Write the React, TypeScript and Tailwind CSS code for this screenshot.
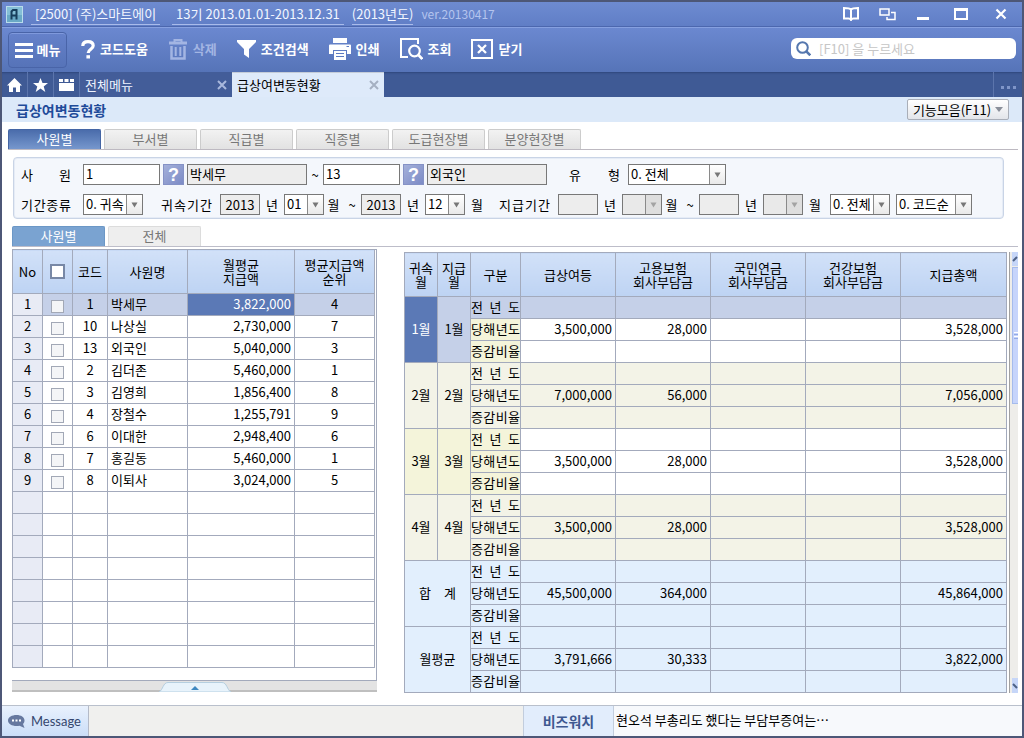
import React from "react";

type Align = "left" | "center" | "right";

const employees = [
  { no: 1, code: 1, name: "박세무", pay: "3,822,000", rank: 4 },
  { no: 2, code: 10, name: "나상실", pay: "2,730,000", rank: 7 },
  { no: 3, code: 13, name: "외국인", pay: "5,040,000", rank: 3 },
  { no: 4, code: 2, name: "김더존", pay: "5,460,000", rank: 1 },
  { no: 5, code: 3, name: "김영희", pay: "1,856,400", rank: 8 },
  { no: 6, code: 4, name: "장철수", pay: "1,255,791", rank: 9 },
  { no: 7, code: 6, name: "이대한", pay: "2,948,400", rank: 6 },
  { no: 8, code: 7, name: "홍길동", pay: "5,460,000", rank: 1 },
  { no: 9, code: 8, name: "이퇴사", pay: "3,024,000", rank: 5 },
];

const months = [
  { label: "1월", pay: "3,500,000", ins: "28,000", total: "3,528,000" },
  { label: "2월", pay: "7,000,000", ins: "56,000", total: "7,056,000" },
  { label: "3월", pay: "3,500,000", ins: "28,000", total: "3,528,000" },
  { label: "4월", pay: "3,500,000", ins: "28,000", total: "3,528,000" },
];

const sums = [
  { label: "합　계", pay: "45,500,000", ins: "364,000", total: "45,864,000" },
  { label: "월평균", pay: "3,791,666", ins: "30,333", total: "3,822,000" },
];

const line = "border border-[#a3aabc]";

function Spread({ text }: { text: string }) {
  return (
    <span className="flex justify-between">
      {Array.from(text).map((c, i) => (
        <span key={i}>{c}</span>
      ))}
    </span>
  );
}

function ToolButton({
  label,
  children,
  faded = false,
}: {
  label: string;
  children: React.ReactNode;
  faded?: boolean;
}) {
  return (
    <button
      type="button"
      disabled={faded}
      className={`flex h-9 items-center gap-[5px] pb-0.5 font-bold ${faded ? "text-[#a3b5e3]" : "text-white"}`}
    >
      {children}
      <span>{label}</span>
    </button>
  );
}

function Picker({ label, value, width, disabled = false }: { label: string; value: string; width: string; disabled?: boolean }) {
  return (
    <span className={`relative block h-[21px] shrink-0 ${width}`}>
      <select
        aria-label={label}
        disabled={disabled}
        defaultValue={value}
        className={`block h-full w-full appearance-none border border-[#787878] pr-4 pb-0.5 pl-[2px] leading-4 text-black opacity-100 ${disabled ? "bg-[#e9e9e9]" : "bg-white"}`}
      >
        <option value={value}>{value}</option>
      </select>
      <span
        className={`pointer-events-none absolute inset-y-px right-px flex w-4 items-center justify-center border-l border-[#8a8a8a] ${disabled ? "bg-[#dedede]" : "bg-linear-to-b from-white to-[#e9e9e9]"}`}
      >
        <svg width="7" height="6" viewBox="0 0 7 6">
          <path d="M0.5 0.5h6L3.5 5.5z" fill={disabled ? "#a3a3a3" : "#777"} />
        </svg>
      </span>
    </span>
  );
}

function TextBox({ label, value, width, readOnly = false, center = false }: { label: string; value: string; width: string; readOnly?: boolean; center?: boolean }) {
  return (
    <input
      type="text"
      aria-label={label}
      defaultValue={value}
      readOnly={readOnly}
      className={`block h-[21px] shrink-0 border border-[#787878] text-black outline-none ${width} ${readOnly ? "bg-[#ededed]" : "bg-white"} ${center ? "text-center" : "pb-0.5 pl-[2px]"}`}
    />
  );
}

function HelpButton({ label }: { label: string }) {
  return (
    <button
      type="button"
      aria-label={label}
      className="mx-[3px] h-[21px] w-[21px] shrink-0 border border-[#8592c6] bg-linear-to-br from-[#a4b0da] to-[#7c8bc6] font-['Liberation_Sans',sans-serif] text-lg leading-[18px] font-bold text-white"
    >
      ?
    </button>
  );
}

function Mark({ children, width = "w-6" }: { children: React.ReactNode; width?: string }) {
  return <span className={`shrink-0 text-center ${width}`}>{children}</span>;
}

function Head({ children }: { children: React.ReactNode }) {
  return (
    <th scope="col" className={`${line} bg-linear-to-b from-[#d2e1f8] to-[#bdd3f3] p-0 leading-[14px] font-normal`}>
      {children}
    </th>
  );
}

function Cell({ children, bg, align = "center", span, cols }: { children?: React.ReactNode; bg: string; align?: Align; span?: number; cols?: number }) {
  const side = align === "right" ? "pr-[3px] text-right" : align === "left" ? "pl-[3px] text-left" : "text-center";
  return (
    <td rowSpan={span} colSpan={cols} className={`${line} pt-0 pb-[2px] leading-[18px] whitespace-nowrap ${side} ${bg}`}>
      {children}
    </td>
  );
}

function Group({ item, index, total }: { item: (typeof months)[number]; index: number; total: boolean }) {
  const first = !total && index === 0;
  const odd = index % 2 === 1;
  const data = total ? "bg-[#e2effd]" : odd ? "bg-[#f3f3e7]" : "bg-white";
  const kind = total ? "bg-[#e2effd]" : odd ? "bg-[#f3f3e7]" : "bg-[#f4f4da]";
  const top = first ? "bg-[#c5d0e8]" : data;
  return (
    <>
      {["전년도", "당해년도", "증감비율"].map((name, r) => {
        const bg = r === 0 ? top : data;
        const filled = r === 1;
        return (
          <tr key={name} className="h-[22px]">
            {r === 0 && total && (
              <Cell bg={data} span={3} cols={2}>
                {item.label}
              </Cell>
            )}
            {r === 0 && !total && (
              <>
                <Cell bg={first ? "bg-[#5b79b6] text-white" : kind} span={3}>
                  {item.label}
                </Cell>
                <Cell bg={first ? "bg-[#c5d0e8]" : kind} span={3}>
                  {item.label}
                </Cell>
              </>
            )}
            <Cell bg={r === 0 && first ? top : kind}>
              <Spread text={name} />
            </Cell>
            <Cell bg={bg} align="right">{filled && item.pay}</Cell>
            <Cell bg={bg} align="right">{filled && item.ins}</Cell>
            <Cell bg={bg} />
            <Cell bg={bg} />
            <Cell bg={bg} align="right">{filled && item.total}</Cell>
          </tr>
        );
      })}
    </>
  );
}

function TitleBar() {
  return (
    <header className="flex h-[25px] items-center border-b border-[#4c67ae] bg-linear-to-b from-[#6e8bd1] to-[#607ec6] pr-px pl-1 whitespace-nowrap text-[#f2f6ff]">
      <svg width="17" height="17" viewBox="0 0 17 17" className="shrink-0">
        <rect x="0.5" y="0.5" width="16" height="16" fill="#84bfd6" stroke="#b9dcec" />
        <rect x="1" y="9" width="15" height="7" fill="#4d93b4" opacity="0.5" />
        <path d="M5.5 13.5V5.5L7 4h3.5v9.5M5.5 9.500h5" fill="none" stroke="#173f5c" strokeWidth="2" />
      </svg>
      <span className="ml-2 border-b border-[#a9bbea] px-1 leading-5">[2500] (주)스마트에이</span>
      <span className="ml-3 border-b border-[#a9bbea] px-1 leading-5">13기 2013.01.01-2013.12.31</span>
      <span className="ml-2 border-b border-[#a9bbea] leading-5">(2013년도)</span>
      <span className="ml-2 text-xs text-[#b4c4ee]">ver.20130417</span>
      <div className="ml-auto flex items-center">
        <button type="button" aria-label="도움말" className="flex w-9 justify-center">
          <svg width="18" height="14" viewBox="0 0 18 14" fill="none" stroke="#fff" strokeWidth="2">
            <path d="M9 2.500C8 1.500 6 1 2 1v10.500h4.500q2 0 2.500 1.500 .5-1.500 2.500-1.500H16V1C12 1 10 1.500 9 2.500zM9 2.500V13" />
          </svg>
        </button>
        <button type="button" aria-label="창 전환" className="flex w-9 justify-center">
          <svg width="17" height="13" viewBox="0 0 17 13" fill="none" stroke="#fff">
            <path d="M1 1h9v6H1z" strokeWidth="1.500" />
            <path d="M12 4.500h4v7H8V9" strokeWidth="1.500" />
          </svg>
        </button>
        <button type="button" aria-label="최소화" className="flex h-4 w-9 items-end justify-center pb-0.5">
          <span className="block h-[3px] w-3 bg-white" />
        </button>
        <button type="button" aria-label="최대화" className="flex w-10 justify-center">
          <span className="block h-3 w-[14px] border-2 border-t-3 border-white" />
        </button>
        <button type="button" aria-label="창 닫기" className="flex w-10 justify-center">
          <svg width="12" height="12" viewBox="0 0 12 12" stroke="#fff" strokeWidth="2.200">
            <path d="M1.500 1.500l9 9M10.500 1.500l-9 9" />
          </svg>
        </button>
      </div>
    </header>
  );
}

function Toolbar() {
  return (
    <nav className="flex h-[45px] items-center gap-5 border-t border-[#86a0e0] bg-linear-to-b from-[#6b88d0] to-[#5674b8] pr-[6px] pl-[6px] whitespace-nowrap">
      <button
        type="button"
        className="-mr-[6px] flex h-9 w-[59px] items-center justify-center gap-1 rounded border border-[#4964a8] bg-linear-to-b from-[#6581ca] to-[#5673b8] font-bold text-white shadow-[inset_0_1px_0_#7f99dc]"
      >
        <svg width="18" height="15" viewBox="0 0 18 15" fill="#fff">
          <path d="M0 0h18v3H0zM0 6h18v3H0zM0 12h18v3H0z" />
        </svg>
        메뉴
      </button>
      <ToolButton label="코드도움">
        <svg width="14" height="19" viewBox="0 0 14 19" fill="none" stroke="#fff">
          <path d="M1.800 6C1.800 3 4 1.700 7 1.700s5.200 1.500 5.200 4.100c0 3.400-5 3.500-5 7.200" strokeWidth="3.200" />
          <path d="M7.200 15.200v3.300" strokeWidth="3.600" />
        </svg>
      </ToolButton>
      <ToolButton label="삭제" faded>
        <svg width="20" height="21" viewBox="0 0 20 21" fill="none" stroke="#a3b5e3">
          <path d="M1 4h18" strokeWidth="3" />
          <path d="M6.500 3V1h7v2" strokeWidth="2" />
          <path d="M3.500 7v12.500h13V7" strokeWidth="2.500" />
          <path d="M7.700 8v9M12.300 8v9" strokeWidth="2" />
        </svg>
      </ToolButton>
      <ToolButton label="조건검색">
        <svg width="19" height="18" viewBox="0 0 19 18" fill="#fff">
          <path d="M0 0h19v2l-7 7v9l-5-3.500V9L0 2z" />
        </svg>
      </ToolButton>
      <ToolButton label="인쇄">
        <svg width="22" height="22" viewBox="0 0 22 22">
          <path d="M4 0h14v5H4zM1 6.500h20q1 0 1 1V16h-4v-4H4v4H0V7.500q0-1 1-1z" fill="#fff" />
          <path d="M5 13h12v9H5z" fill="#fff" />
          <path d="M7 15.500h8M7 18.500h8" stroke="#5d7bc2" strokeWidth="1.200" />
          <path d="M17.500 8.500h2.500" stroke="#5d7bc2" />
        </svg>
      </ToolButton>
      <ToolButton label="조회">
        <svg width="23" height="22" viewBox="0 0 23 22" fill="none" stroke="#fff">
          <path d="M8 19H1V1h17v5" strokeWidth="2" />
          <circle cx="14.500" cy="13" r="5.300" strokeWidth="2.200" />
          <path d="M18.500 17l3.800 4" strokeWidth="2.600" />
        </svg>
      </ToolButton>
      <ToolButton label="닫기">
        <svg width="22" height="20" viewBox="0 0 22 20" fill="none" stroke="#fff">
          <path d="M1 1h20v18H1z" strokeWidth="2" />
          <path d="M7 6l8 8M15 6l-8 8" strokeWidth="2.300" />
        </svg>
      </ToolButton>
      <label className="mb-[3px] ml-auto flex h-[21px] w-[225px] items-center gap-2 rounded-md bg-white pl-[5px]">
        <svg width="15" height="15" viewBox="0 0 15 15" fill="none" stroke="#5577ae">
          <circle cx="6.500" cy="6.500" r="5.300" strokeWidth="2" />
          <path d="M10.300 10.300l4 4" strokeWidth="2.600" />
        </svg>
        <input
          type="text"
          aria-label="검색"
          placeholder="[F10] 을 누르세요"
          className="min-w-0 flex-1 bg-transparent text-black outline-none placeholder:text-[#c6c6c6]"
        />
      </label>
    </nav>
  );
}

function CloseMark({ color }: { color: string }) {
  return (
    <svg width="10" height="10" viewBox="0 0 10 10" stroke={color} strokeWidth="2">
      <path d="M1 1l8 8M9 1l-8 8" />
    </svg>
  );
}

function DocumentTabs() {
  return (
    <div className="flex h-[25px] bg-[#3f5a95] text-[#eef3ff] shadow-[inset_0_2px_2px_-1px_#2f477c]">
      <button type="button" aria-label="홈" className="flex w-[26px] items-center justify-center border-r border-[#5c75ac]">
        <svg width="15" height="14" viewBox="0 0 15 14" fill="#fff">
          <path d="M7.500 0L15 7.500h-2V14H9V9.500H6V14H2V7.500H0z" />
        </svg>
      </button>
      <button type="button" aria-label="즐겨찾기" className="flex w-[26px] items-center justify-center border-r border-[#5c75ac]">
        <svg width="15" height="14" viewBox="0 0 15 14" fill="#fff">
          <path d="M7.500 0l2 5H15l-4.300 3.400 1.600 5.600-4.800-3.400L2.700 14l1.600-5.600L0 5h5.500z" />
        </svg>
      </button>
      <button type="button" aria-label="메뉴 목록" className="flex w-[26px] items-center justify-center border-r border-[#5c75ac]">
        <svg width="15" height="13" viewBox="0 0 15 13" fill="#fff">
          <path d="M0 1h4v3H0zM5.500 1h4v3h-4zM11 1h4v3h-4zM0 5h15v8H0z" />
        </svg>
      </button>
      <div className="flex w-[152px] items-center justify-between bg-[#435d99] px-[5px]">
        <button type="button">전체메뉴</button>
        <button type="button" aria-label="전체메뉴 탭 닫기">
          <CloseMark color="#a9b8dc" />
        </button>
      </div>
      <div className="flex w-[152px] items-center justify-between border-t border-[#c4ccd8] bg-[#deeafa] px-[5px] text-black">
        <button type="button">급상여변동현황</button>
        <button type="button" aria-label="급상여변동현황 탭 닫기">
          <CloseMark color="#a5b0c2" />
        </button>
      </div>
      <button type="button" aria-label="더 보기" className="ml-auto flex w-[29px] items-center justify-center gap-[3px] border-l border-[#5c75ac] pt-[5px]">
        <span className="size-[3px] bg-[#7f95c8]" />
        <span className="size-[3px] bg-[#7f95c8]" />
        <span className="size-[3px] bg-[#7f95c8]" />
      </button>
    </div>
  );
}

function CategoryTabs() {
  return (
    <div className="-ml-1 flex gap-[3px] border-b border-[#bdb9c1]">
      {["사원별", "부서별", "직급별", "직종별", "도급현장별", "분양현장별"].map((t, i) => (
        <button
          key={t}
          type="button"
          className={`h-5 w-[93px] rounded-t-xs border border-b-0 pb-0.5 leading-4 ${i === 0 ? "border-[#4465a4] bg-linear-to-b from-[#4a6cab] to-[#7697cd] text-white" : "border-[#cccccc] bg-linear-to-b from-[#f2f2f2] to-[#e2e2e2] text-[#777]"}`}
        >
          {t}
        </button>
      ))}
    </div>
  );
}

function Filters() {
  return (
    <form className="mt-[7px] mr-[14px] ml-px flex flex-col gap-[9px] rounded-sm border border-[#c9d4e6] bg-[#f4f7fc] pt-[6px] pb-[3px] pl-[7px] whitespace-nowrap shadow-[inset_0_0_0_1px_#e6ecf6]">
      <div className="flex h-[21px] items-center leading-[18px]">
        <span className="mr-3 w-[50px] shrink-0"><Spread text="사원" /></span>
        <TextBox label="시작 사원 코드" value="1" width="w-[77px]" />
        <HelpButton label="시작 사원 찾기" />
        <TextBox label="시작 사원명" value="박세무" width="w-[120px]" readOnly />
        <Mark width="w-4">~</Mark>
        <TextBox label="종료 사원 코드" value="13" width="w-[77px]" />
        <HelpButton label="종료 사원 찾기" />
        <TextBox label="종료 사원명" value="외국인" width="w-[120px]" readOnly />
        <span className="mr-2 ml-[22px] w-[51px] shrink-0"><Spread text="유형" /></span>
        <Picker label="유형" value="0. 전체" width="w-[98px]" />
      </div>
      <div className="flex h-[21px] items-center leading-[18px]">
        <span className="mr-3 w-[50px] shrink-0"><Spread text="기간종류" /></span>
        <Picker label="기간종류" value="0. 귀속" width="w-[60px]" />
        <span className="mr-2 ml-[18px] w-[51px] shrink-0"><Spread text="귀속기간" /></span>
        <TextBox label="귀속 시작 연도" value="2013" width="w-10" readOnly center />
        <Mark>년</Mark>
        <Picker label="귀속 시작 월" value="01" width="w-10" />
        <Mark width="w-[19px]">월</Mark>
        <Mark width="w-[18px]">~</Mark>
        <TextBox label="귀속 종료 연도" value="2013" width="w-10" readOnly center />
        <Mark>년</Mark>
        <Picker label="귀속 종료 월" value="12" width="w-10" />
        <Mark>월</Mark>
        <span className="mr-2 ml-[10px] w-[51px] shrink-0"><Spread text="지급기간" /></span>
        <TextBox label="지급 시작 연도" value="" width="w-10" readOnly center />
        <Mark>년</Mark>
        <Picker label="지급 시작 월" value="" width="w-10" disabled />
        <Mark width="w-[19px]">월</Mark>
        <Mark width="w-[18px]">~</Mark>
        <TextBox label="지급 종료 연도" value="" width="w-10" readOnly center />
        <Mark>년</Mark>
        <Picker label="지급 종료 월" value="" width="w-10" disabled />
        <Mark>월</Mark>
        <span className="ml-[3px] flex gap-[6px]">
          <Picker label="구분" value="0. 전체" width="w-[60px]" />
          <Picker label="정렬" value="0. 코드순" width="w-[76px]" />
        </span>
      </div>
    </form>
  );
}

function ViewTabs() {
  return (
    <div className="mt-[7px] flex gap-[3px] border-b border-[#bdbdc9]">
      <button type="button" className="h-5 w-[93px] rounded-t-xs border border-b-0 border-[#6b97c6] bg-[#7aa3d1] pb-0.5 leading-4 text-white">
        사원별
      </button>
      <button type="button" className="h-5 w-[93px] rounded-t-xs border border-b-0 border-[#dcdcdc] bg-[#eeeeee] pb-0.5 leading-4 text-[#777]">
        전체
      </button>
    </div>
  );
}

function EmployeePanel() {
  return (
    <section className="mt-[2px] w-[365px] shrink-0">
      <div className="border-t border-r border-b border-[#a3aabc] pr-px pb-3">
        <table className="-mt-px w-full table-fixed border-collapse">
          <colgroup>
            <col className="w-[30px]" />
            <col className="w-[30px]" />
            <col className="w-[35px]" />
            <col className="w-[80px]" />
            <col className="w-[107px]" />
            <col />
          </colgroup>
          <thead>
            <tr className="h-11">
              <Head>No</Head>
              <Head>
                <input type="checkbox" aria-label="전체 선택" className="mx-auto block size-[15px] appearance-none border-2 border-[#7888a6] bg-white" />
              </Head>
              <Head>코드</Head>
              <Head>사원명</Head>
              <Head>월평균<br />지급액</Head>
              <Head>평균지급액<br />순위</Head>
            </tr>
          </thead>
          <tbody>
            {employees.map((e, i) => {
              const bg = i === 0 ? "bg-[#c5d0e8]" : "bg-white";
              return (
                <tr key={e.no} className="h-[22px]">
                  <Cell bg="bg-[#e8ebf5]">{e.no}</Cell>
                  <Cell bg={bg}>
                    <input type="checkbox" aria-label={`${e.name} 선택`} className="mx-auto mt-[6px] block size-[13px] appearance-none border border-[#a2a8b6] bg-[#f4f5f7]" />
                  </Cell>
                  <Cell bg={bg}>{e.code}</Cell>
                  <Cell bg={bg} align="left">{e.name}</Cell>
                  <Cell bg={i === 0 ? "bg-[#5b79b6] text-white" : bg} align="right">{e.pay}</Cell>
                  <Cell bg={bg}>{e.rank}</Cell>
                </tr>
              );
            })}
            {Array.from({ length: 8 }, (_, i) => (
              <tr key={`empty-${i}`} className="h-[22px]">
                <Cell bg="bg-[#e8ebf5]" />
                <Cell bg="bg-white" />
                <Cell bg="bg-white" />
                <Cell bg="bg-white" />
                <Cell bg="bg-white" />
                <Cell bg="bg-white" />
              </tr>
            ))}
          </tbody>
        </table>
      </div>
      <button type="button" aria-label="하단 패널 열기" className="flex h-[11px] w-full items-end justify-center border-b-2 border-[#bfbfbf] bg-[#e3e3e3]">
        <svg width="72" height="11" viewBox="0 0 72 11" className="-mb-[2px]">
          <path d="M0 11C4 9 4 1.500 9 1.500h54C68 1.500 68 9 72 11z" fill="#e8f3fb" stroke="#b5cfe0" />
          <path d="M32 9l4-4 4 4z" fill="#3f88c0" />
        </svg>
      </button>
    </section>
  );
}

function PaymentPanel() {
  return (
    <section className="mt-[5px] flex min-w-0 flex-1">
      <table className="min-w-0 flex-1 table-fixed border-collapse">
        <colgroup>
          <col className="w-[33px]" />
          <col className="w-[33px]" />
          <col className="w-[50px]" />
          <col className="w-[95px]" />
          <col className="w-[95px]" />
          <col className="w-[95px]" />
          <col className="w-[95px]" />
          <col />
        </colgroup>
        <thead>
          <tr className="h-11">
            <Head>귀속<br />월</Head>
            <Head>지급<br />월</Head>
            <Head>구분</Head>
            <Head>급상여등</Head>
            <Head>고용보험<br />회사부담금</Head>
            <Head>국민연금<br />회사부담금</Head>
            <Head>건강보험<br />회사부담금</Head>
            <Head>지급총액</Head>
          </tr>
        </thead>
        <tbody>
          {months.map((m, i) => (
            <Group key={m.label} item={m} index={i} total={false} />
          ))}
          {sums.map((m, i) => (
            <Group key={m.label} item={m} index={i} total />
          ))}
        </tbody>
      </table>
      <div aria-hidden="true" className="ml-[2px] flex w-[9px] flex-col border-l border-[#a0a0a0] bg-[#eeedea] pl-[2px]">
        <div className="flex h-[14px] items-center justify-center bg-[#c6d6f8]">
          <svg width="6" height="6" viewBox="0 0 6 6" fill="none" stroke="#4d6185" strokeWidth="2">
            <path d="M1 5l4-4" />
          </svg>
        </div>
        <div className="mt-px flex h-[137px] flex-col items-center justify-center gap-px border-y border-l border-[#a5bbec] bg-[#c6d4fb]">
          <span className="h-px w-1 bg-white" />
          <span className="h-px w-1 bg-[#93aae6]" />
          <span className="h-px w-1 bg-white" />
          <span className="h-px w-1 bg-[#93aae6]" />
        </div>
        <div className="mt-auto flex h-[15px] items-center justify-center bg-[#c6d6f8]">
          <svg width="6" height="6" viewBox="0 0 6 6" fill="none" stroke="#4d6185" strokeWidth="2">
            <path d="M1 1l4 4" />
          </svg>
        </div>
      </div>
    </section>
  );
}

function StatusBar() {
  return (
    <footer className="flex h-[31px] items-stretch border-t border-[#b9c0cc] bg-[#f0f0ee]">
      <button
        type="button"
        className="flex w-[87px] items-center gap-[6px] border-r border-[#b4bac8] bg-linear-to-b from-[#e9f1fd] to-[#cbdef8] pl-[6px] font-['Lato',sans-serif] text-[#34466e]"
      >
        <svg width="17" height="13" viewBox="0 0 17 13">
          <path d="M8.500 0C13 0 16.500 2.200 16.500 5.500c0 1.500-.6 2.600-1.500 3.500l1.500 4-5-2.300c-1 .2-2 .3-3 .3C4 11 0 8.800 0 5.500S4 0 8.500 0z" fill="#66789f" />
          <path d="M4 4.500h2v2H4zM7.500 4.500h2v2h-2zM11 4.500h2v2h-2z" fill="#fff" />
        </svg>
        Message
      </button>
      <div className="ml-auto flex w-[91px] items-center justify-center border-x border-[#c2cddd] bg-[#e2edfc] text-sm font-bold text-[#3e5890]">
        비즈워치
      </div>
      <div className="flex w-[40%] items-center bg-[#f7f9fc] pb-0.5 pl-[2px]">현오석 부총리도 했다는 부담부증여는⋯</div>
    </footer>
  );
}

export default function App() {
  return (
    <div className="flex min-h-screen flex-col border-2 border-[#4d5777] bg-white font-['Noto_Sans_CJK_KR',sans-serif] text-[13px] leading-5 text-black">
      <TitleBar />
      <Toolbar />
      <DocumentTabs />
      <div className="flex h-[25px] items-center justify-between bg-[#dce9f9] pr-[13px] pl-[14px]">
        <h1 className="text-sm font-bold text-[#1f4b99]">급상여변동현황</h1>
        <button type="button" className="flex h-[21px] w-[102px] items-center justify-center gap-1 rounded-xs border border-[#a9aeb8] bg-linear-to-b from-white to-[#e3e5ea] leading-[18px] whitespace-nowrap">
          기능모음(F11)
          <svg width="8" height="5" viewBox="0 0 8 5">
            <path d="M0 0h8L4 5z" fill="#8a8f9a" />
          </svg>
        </button>
      </div>
      <main className="flex-1 pt-[7px] pr-1 pb-3 pl-[10px]">
        <CategoryTabs />
        <Filters />
        <ViewTabs />
        <div className="flex items-start gap-[27px]">
          <EmployeePanel />
          <PaymentPanel />
        </div>
      </main>
      <StatusBar />
    </div>
  );
}
